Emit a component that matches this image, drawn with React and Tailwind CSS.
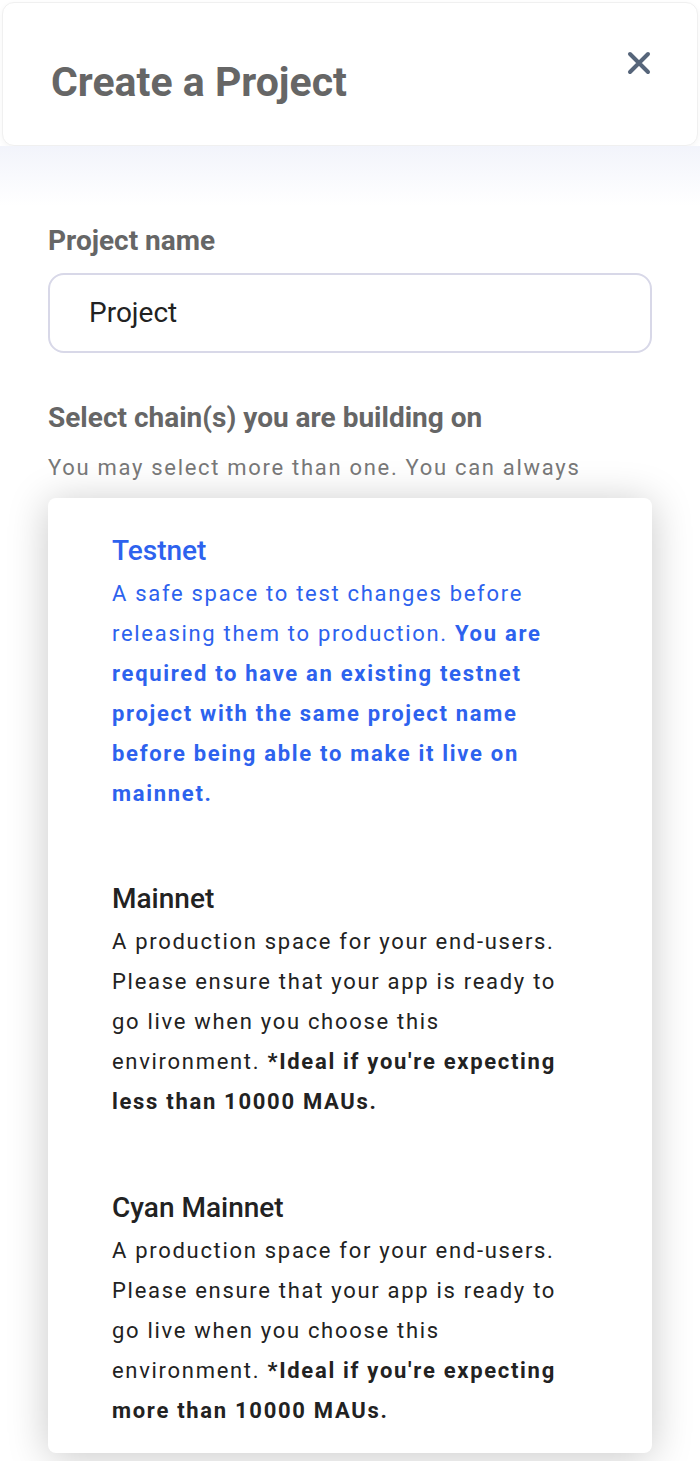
import React from 'react';

const chains = [
  {
    name: 'Testnet',
    active: true,
    desc: 'A safe space to test changes before releasing them to production.',
    bold: 'You are required to have an existing testnet project with the same project name before being able to make it live on mainnet.',
  },
  {
    name: 'Mainnet',
    desc: 'A production space for your end-users. Please ensure that your app is ready to go live when you choose this environment.',
    bold: "*Ideal if you're expecting less than 10000 MAUs.",
  },
  {
    name: 'Cyan Mainnet',
    desc: 'A production space for your end-users. Please ensure that your app is ready to go live when you choose this environment.',
    bold: "*Ideal if you're expecting more than 10000 MAUs.",
  },
];

const CloseIcon = () => (
  <svg width="24" height="24" viewBox="0 0 24 24" fill="none" stroke="#56657a" strokeWidth="4" strokeLinecap="round">
    <path d="M3 3 L21 21 M21 3 L3 21" />
  </svg>
);

export default function App() {
  return (
    <div className="min-h-[1461px] bg-white font-['Roboto',sans-serif]">
      {/* Header */}
      <div className="p-[2px]">
        <div className="flex h-[144px] items-start justify-between rounded-xl border border-[#f0f0f0] bg-white pl-[48px] pr-[46px] shadow-[0_2px_6px_rgba(0,0,0,0.04)]">
          <h1 className="mt-[55px] text-[41px] font-bold leading-[48px] text-[#666666]">Create a Project</h1>
          <button className="mt-[48px] p-0">
            <CloseIcon />
          </button>
        </div>
      </div>
      <div className="h-[60px] -mt-[2px] bg-gradient-to-b from-[#f2f4fb] to-white" />

      <div className="px-12 mt-[18px]">
        <label className="block text-[28px] font-bold leading-[34px] text-[#666666]">Project name</label>
        <div className="mt-[15px] flex h-[80px] items-center rounded-2xl border-2 border-[#d8d8e8] pl-[39px]">
          <span className="text-[28px] text-[#222222]">Project</span>
        </div>

        <h2 className="mt-[48px] text-[28px] font-bold leading-[34px] text-[#666666]">Select chain(s) you are building on</h2>
        <p className="mt-[18px] text-[22px] leading-[30px] tracking-[1.7px] text-[#777777]">You may select more than one. You can always</p>

        <div className="mt-[15px] rounded-lg bg-white pb-[22px] pl-16 pt-[33px] shadow-[0_4px_40px_rgba(0,0,0,0.22)]">
          {chains.map((c, i) => (
            <div key={c.name} className={i === 0 ? '' : i === 1 ? 'mt-[65px]' : 'mt-[66px]'}>
              <div className={`text-[28px] font-medium leading-[40px] ${c.active ? 'text-[#2d62ee]' : 'text-[#222222]'}`}>
                {c.name}
              </div>
              <p className={`mt-[3px] max-w-[460px] text-[22px] leading-[40px] tracking-[1.7px] ${c.active ? 'text-[#2d62ee]' : 'text-[#222222]'}`}>
                {c.desc} <span className="font-bold">{c.bold}</span>
              </p>
            </div>
          ))}
        </div>
      </div>
    </div>
  );
}
